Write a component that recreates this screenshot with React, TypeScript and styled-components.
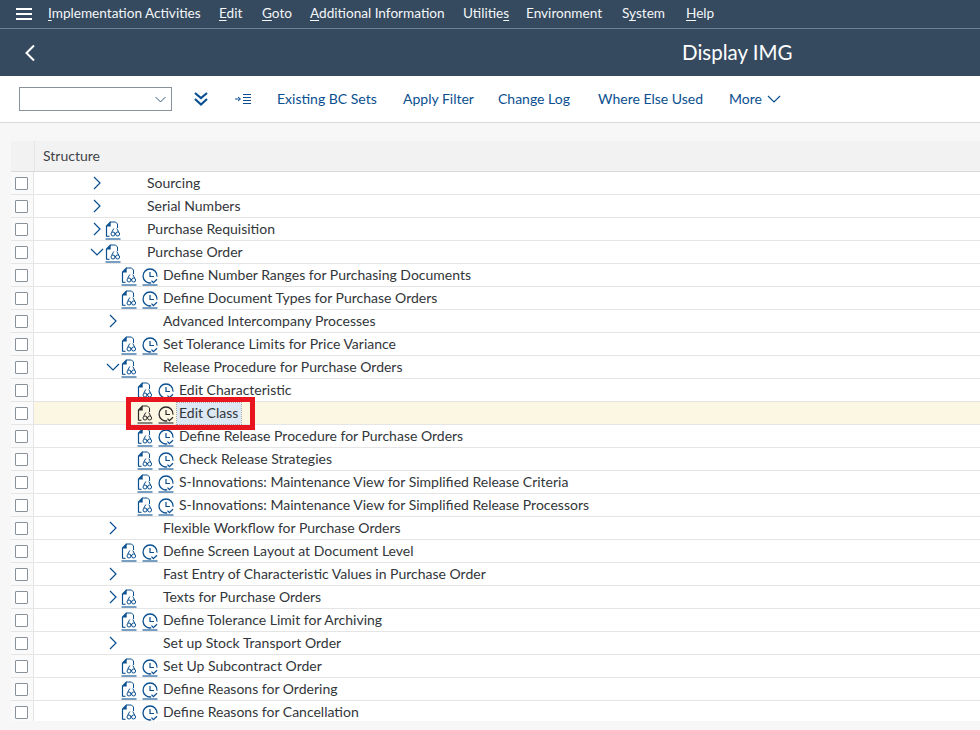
import styled, { createGlobalStyle } from "styled-components";

const GlobalStyle = createGlobalStyle`
  html, body {
    margin: 0;
    padding: 0;
    background: #f7f7f7;
  }
  body {
    font-family: "Lato", "Liberation Sans", sans-serif;
    font-size: 14px;
    color: #32363a;
  }
`;

const Page = styled.div`
  width: 980px;
  height: 730px;
  overflow: hidden;
  background: #f7f7f7;
`;

const Shell = styled.header`
  background: #354a5f;
  color: #fff;
`;

const MenuBar = styled.nav`
  height: 28px;
  display: flex;
  align-items: center;
  border-bottom: 1px solid #6f8397;
  padding-left: 16px;
`;

const Burger = styled.div`
  width: 16px;
  height: 12px;
  margin-right: 16px;
  border-top: 2px solid #fff;
  border-bottom: 2px solid #fff;
  box-sizing: border-box;
  position: relative;

  &::after {
    content: "";
    position: absolute;
    left: 0;
    right: 0;
    top: 3px;
    height: 2px;
    background: #fff;
  }
`;

const MenuItem = styled.span<{ $w: number }>`
  width: ${(p) => p.$w}px;
  flex: none;
  padding-bottom: 2px;
  font-size: 13.6px;
  white-space: nowrap;
  color: #f4f6f8;

  u {
    text-underline-offset: 2px;
  }
`;

const TitleBar = styled.div`
  height: 47px;
  display: flex;
  align-items: center;
  padding-left: 24px;
`;

const Title = styled.h1`
  margin: 0 0 2px 646px;
  font-size: 20.5px;
  font-weight: 400;
  white-space: nowrap;
`;

const Toolbar = styled.div`
  height: 46px;
  background: #fff;
  border-bottom: 1px solid #d9d9d9;
  display: flex;
  align-items: center;
  padding-left: 19px;
`;

const Combo = styled.div`
  width: 153px;
  height: 24px;
  box-sizing: border-box;
  border: 1px solid #89919a;
  background: #fff;
  display: flex;
  align-items: center;
  justify-content: flex-end;
  padding-right: 4px;
  margin-right: 21px;
`;

const ToolIcon = styled.div<{ $w: number }>`
  width: ${(p) => p.$w}px;
  flex: none;
  display: flex;
  align-items: center;
`;

const ToolLink = styled.span<{ $w: number }>`
  color: #0a4f8f;
  width: ${(p) => p.$w}px;
  flex: none;
  padding-bottom: 1px;
  white-space: nowrap;
  display: flex;
  align-items: center;
  gap: 4px;
`;

const Content = styled.main`
  padding: 18px 0 0 11px;
`;

const Table = styled.div`
  width: 969px;
  height: 580px;
  overflow: hidden;
`;

const HeaderRow = styled.div`
  height: 30px;
  background: #f2f2f2;
  border-bottom: 1px solid #d9d9d9;
  display: flex;
  align-items: center;
`;

const HeaderSelect = styled.div`
  width: 23px;
  height: 100%;
  border-right: 1px solid #e5e5e5;
`;

const HeaderLabel = styled.div`
  padding: 0 0 2px 8px;
  color: #3f4449;
`;

const Row = styled.div<{ $active?: boolean }>`
  height: 22px;
  border-bottom: 1px solid #e5e5e5;
  background: ${(p) => (p.$active ? "#fcf7e3" : "#fff")};
  display: flex;
  align-items: center;
  position: relative;
`;

const SelectCell = styled.div`
  width: 23px;
  height: 100%;
  flex: none;
  border-right: 1px solid #e5e5e5;
  background: #fafafa;
  display: flex;
  align-items: center;
  padding-left: 4px;
  box-sizing: border-box;
`;

const Checkbox = styled.div`
  width: 13px;
  height: 13px;
  box-sizing: border-box;
  border: 1px solid #89919a;
  border-radius: 1px;
  background: #fff;
`;

const TreeCell = styled.div<{ $level: number }>`
  display: flex;
  align-items: center;
  padding-left: ${(p) => 55 + p.$level * 16}px;
`;

const ArrowSlot = styled.div`
  width: 16px;
  height: 16px;
  flex: none;
  display: flex;
  align-items: center;
  justify-content: center;
`;

const IconSlot = styled.div`
  width: 21px;
  height: 22px;
  flex: none;
  display: flex;
  align-items: center;
`;

const NodeText = styled.span<{ $selected?: boolean }>`
  white-space: nowrap;
  color: #32363a;
  padding-bottom: 2px;
  ${(p) =>
    p.$selected
      ? `
    background: #dce8f4;
    padding: 1px 2px 3px;
    margin-left: -2px;
    width: 60px;
    outline: 1px dotted #9aa8b6;
  `
      : ""}
`;

const Highlight = styled.div`
  position: absolute;
  left: 115px;
  top: -5px;
  z-index: 1;
  width: 129px;
  height: 33px;
  box-sizing: border-box;
  border: 5px solid #e8141e;
  pointer-events: none;
`;

function Chevron({
  dir,
  color = "#0a4f8f",
  size = 16,
}: {
  dir: "right" | "down" | "left";
  color?: string;
  size?: number;
}) {
  const d =
    dir === "right" ? "M5 2 L11 8 L5 14" : dir === "down" ? "M2 5 L8 11 L14 5" : "M11 2 L5 8 L11 14";
  return (
    <svg width={size} height={size} viewBox="0 0 16 16" fill="none">
      <path d={d} stroke={color} strokeWidth="1.2" />
    </svg>
  );
}

function DocIcon({ color }: { color: string }) {
  return (
    <svg width="16" height="22" viewBox="0 -3 16 22" fill="none">
      <path d="M1.5 15.5 V5 L5.5 1" stroke={color} strokeWidth="1.2" />
      <path d="M1.5 5.5 H5.7 V1 Z" fill={color} />
      <path d="M5 1 H10.5 L12.5 3 V7" stroke={color} strokeWidth="1" />
      <path d="M1.5 15.3 H4.5" stroke={color} strokeWidth="1.1" />
      <circle cx="8" cy="13" r="2" stroke={color} strokeWidth="1" />
      <circle cx="12.6" cy="13" r="2" stroke={color} strokeWidth="1" />
      <path d="M9.6 12.5 H11 M6.8 11 L8.8 7.5 M13.6 11 L11.8 7.5" stroke={color} strokeWidth="1" />
      <path d="M0.5 18 H15.5" stroke={color} strokeWidth="1.1" />
    </svg>
  );
}

function ClockIcon({ color }: { color: string }) {
  return (
    <svg width="16" height="22" viewBox="0 -3 16 22" fill="none">
      <path d="M9.2 15.9 A7 7 0 1 1 15 9.6" stroke={color} strokeWidth="1.3" />
      <path d="M8 5 V9.5 H12" stroke={color} strokeWidth="1.2" />
      <path d="M9.5 13.6 L11.4 15.6 L15 12.2" stroke={color} strokeWidth="1.3" />
      <path d="M0.5 18 H15.5" stroke={color} strokeWidth="1.1" />
    </svg>
  );
}

type Node = {
  text: string;
  level: number;
  arrow?: "right" | "down";
  doc?: boolean;
  clock?: boolean;
};

const nodes: Node[] = [
  { text: "Sourcing", level: 0, arrow: "right" },
  { text: "Serial Numbers", level: 0, arrow: "right" },
  { text: "Purchase Requisition", level: 0, arrow: "right", doc: true },
  { text: "Purchase Order", level: 0, arrow: "down", doc: true },
  { text: "Define Number Ranges for Purchasing Documents", level: 1, doc: true, clock: true },
  { text: "Define Document Types for Purchase Orders", level: 1, doc: true, clock: true },
  { text: "Advanced Intercompany Processes", level: 1, arrow: "right" },
  { text: "Set Tolerance Limits for Price Variance", level: 1, doc: true, clock: true },
  { text: "Release Procedure for Purchase Orders", level: 1, arrow: "down", doc: true },
  { text: "Edit Characteristic", level: 2, doc: true, clock: true },
  { text: "Edit Class", level: 2, doc: true, clock: true },
  { text: "Define Release Procedure for Purchase Orders", level: 2, doc: true, clock: true },
  { text: "Check Release Strategies", level: 2, doc: true, clock: true },
  { text: "S-Innovations: Maintenance View for Simplified Release Criteria", level: 2, doc: true, clock: true },
  { text: "S-Innovations: Maintenance View for Simplified Release Processors", level: 2, doc: true, clock: true },
  { text: "Flexible Workflow for Purchase Orders", level: 1, arrow: "right" },
  { text: "Define Screen Layout at Document Level", level: 1, doc: true, clock: true },
  { text: "Fast Entry of Characteristic Values in Purchase Order", level: 1, arrow: "right" },
  { text: "Texts for Purchase Orders", level: 1, arrow: "right", doc: true },
  { text: "Define Tolerance Limit for Archiving", level: 1, doc: true, clock: true },
  { text: "Set up Stock Transport Order", level: 1, arrow: "right" },
  { text: "Set Up Subcontract Order", level: 1, doc: true, clock: true },
  { text: "Define Reasons for Ordering", level: 1, doc: true, clock: true },
  { text: "Define Reasons for Cancellation", level: 1, doc: true, clock: true },
];

export default function App() {
  return (
    <Page>
      <GlobalStyle />
      <Shell>
        <MenuBar>
          <Burger />
          <MenuItem $w={171}><u>I</u>mplementation Activities</MenuItem>
          <MenuItem $w={43}><u>E</u>dit</MenuItem>
          <MenuItem $w={48}><u>G</u>oto</MenuItem>
          <MenuItem $w={153}><u>A</u>dditional Information</MenuItem>
          <MenuItem $w={63}>Utilitie<u>s</u></MenuItem>
          <MenuItem $w={96}>Environment</MenuItem>
          <MenuItem $w={64}>S<u>y</u>stem</MenuItem>
          <MenuItem $w={40}><u>H</u>elp</MenuItem>
        </MenuBar>
        <TitleBar>
          <svg width="12" height="18" viewBox="0 0 12 18" fill="none">
            <path d="M10 1.5 L2.5 9 L10 16.5" stroke="#fff" strokeWidth="2" />
          </svg>
          <Title>Display IMG</Title>
        </TitleBar>
      </Shell>
      <Toolbar>
        <Combo>
          <Chevron dir="down" color="#2f5780" size={13} />
        </Combo>
        <ToolIcon $w={42}>
          <svg width="16" height="16" viewBox="0 0 16 16" fill="none">
            <path d="M2 2 L8 7 L14 2 M2 8 L8 13.5 L14 8" stroke="#0a4f8f" strokeWidth="2.2" />
          </svg>
        </ToolIcon>
        <ToolIcon $w={42}>
          <svg width="16" height="12" viewBox="0 0 16 12" fill="none">
            <path d="M0 6 H5 M3 4 L5.5 6 L3 8" stroke="#0a4f8f" strokeWidth="1" />
            <path d="M8 1.5 H16 M8 4.5 H16 M8 7.5 H16 M8 10.5 H16" stroke="#0a4f8f" strokeWidth="1" />
          </svg>
        </ToolIcon>
        <ToolLink $w={126}>Existing BC Sets</ToolLink>
        <ToolLink $w={95}>Apply Filter</ToolLink>
        <ToolLink $w={100}>Change Log</ToolLink>
        <ToolLink $w={131}>Where Else Used</ToolLink>
        <ToolLink $w={60}>
          More
          <Chevron dir="down" />
        </ToolLink>
      </Toolbar>
      <Content>
        <Table>
          <HeaderRow>
            <HeaderSelect />
            <HeaderLabel>Structure</HeaderLabel>
          </HeaderRow>
          {nodes.map((n) => {
            const active = n.text === "Edit Class";
            const color = active ? "#2b2b2b" : "#0a4f8f";
            return (
              <Row key={n.text} $active={active}>
                <SelectCell>
                  <Checkbox />
                </SelectCell>
                <TreeCell $level={n.level}>
                  <ArrowSlot>{n.arrow && <Chevron dir={n.arrow} />}</ArrowSlot>
                  <IconSlot>{n.doc && <DocIcon color={color} />}</IconSlot>
                  <IconSlot>{n.clock && <ClockIcon color={color} />}</IconSlot>
                  <NodeText $selected={active}>{n.text}</NodeText>
                </TreeCell>
                {active && <Highlight />}
              </Row>
            );
          })}
        </Table>
      </Content>
    </Page>
  );
}
